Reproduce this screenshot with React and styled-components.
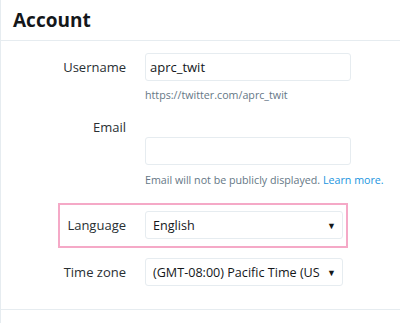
import React from 'react';
import styled, { createGlobalStyle } from 'styled-components';

const Global = createGlobalStyle`
  body {
    margin: 0;
    background: #fff;
    font-family: "Open Sans", "Noto Sans", sans-serif;
    color: #14171a;
  }
`;

// Styled start

const Page = styled.div`
  width: 399px;
  height: 323px;
  border-left: 1px solid #e6ecf0;
  overflow: hidden;
`;

const Header = styled.h1`
  margin: 0;
  height: 40px;
  line-height: 40px;
  padding-left: 12px;
  font-size: 19px;
  font-weight: 700;
  border-bottom: 1px solid #e6ecf0;
`;

const Form = styled.div`
  padding-top: 12px;
`;

const Row = styled.div`
  display: grid;
  grid-template-columns: 125px 206px;
  column-gap: 19px;
  align-items: ${p => (p.$center ? 'center' : 'start')};
  margin-top: ${p => p.$top || 0}px;
`;

const Highlight = styled(Row)`
  width: 284px;
  margin-left: 57px;
  border: 2px solid #f5a9c7;
  padding: 6px 2px 7px 0;
  grid-template-columns: 66px 198px;
`;

const Label = styled.label`
  text-align: right;
  font-size: 13px;
  line-height: ${p => p.$lh || 28}px;
  color: #292f33;
`;

const Field = styled.div`
  display: flex;
  flex-direction: column;
  padding-top: ${p => p.$pad || 0}px;
`;

const Input = styled.input`
  box-sizing: border-box;
  width: 206px;
  height: 28px;
  border: 1px solid #e6ecf0;
  border-radius: 3px;
  padding: 0 4px;
  font-family: inherit;
  font-size: 13px;
  color: #14171a;
  outline: none;
`;

const Hint = styled.div`
  margin-top: ${p => p.$mt || 6}px;
  font-size: 10.7px;
  line-height: 16px;
  color: #657786;
  white-space: nowrap;
`;

const Link = styled.a`
  color: #1b95e0;
  text-decoration: none;
`;

const SelectWrap = styled.div`
  position: relative;
  width: 198px;
  height: 28px;
`;

const Select = styled.select`
  box-sizing: border-box;
  width: 100%;
  height: 28px;
  appearance: none;
  -webkit-appearance: none;
  background: #fff;
  border: 1px solid #e6ecf0;
  border-radius: 3px;
  padding: 0 21px 0 7px;
  font-family: inherit;
  font-size: 12.6px;
  color: #14171a;
  outline: none;
`;

const Arrow = styled.span`
  position: absolute;
  right: 7px;
  top: 50%;
  transform: translateY(-50%);
  font-size: 9px;
  color: #14171a;
  pointer-events: none;
`;

const Footer = styled.div`
  margin-top: 23px;
  border-top: 1px solid #e6ecf0;
`;

// Styled end

function Dropdown({ value }) {
  return (
    <SelectWrap>
      <Select defaultValue={value}>
        <option value={value}>{value}</option>
      </Select>
      <Arrow>▼</Arrow>
    </SelectWrap>
  );
}

export default function App() {
  return (
    <>
      <Global />
      <Page>
        <Header>Account</Header>
        <Form>
          <Row>
            <Label>Username</Label>
            <Field>
              <Input defaultValue="aprc_twit" />
              <Hint>https://twitter.com/aprc_twit</Hint>
            </Field>
          </Row>
          <Row $top={14}>
            <Label $lh={20}>Email</Label>
            <Field $pad={20}>
              <Input />
              <Hint $mt={7}>
                Email will not be publicly displayed. <Link href="#">Learn more.</Link>
              </Hint>
            </Field>
          </Row>
          <Highlight $center $top={15}>
            <Label>Language</Label>
            <Dropdown value="English" />
          </Highlight>
          <Row $center $top={10}>
            <Label>Time zone</Label>
            <Dropdown value="(GMT-08:00) Pacific Time (US & Canada)" />
          </Row>
          <Footer />
        </Form>
      </Page>
    </>
  );
}
